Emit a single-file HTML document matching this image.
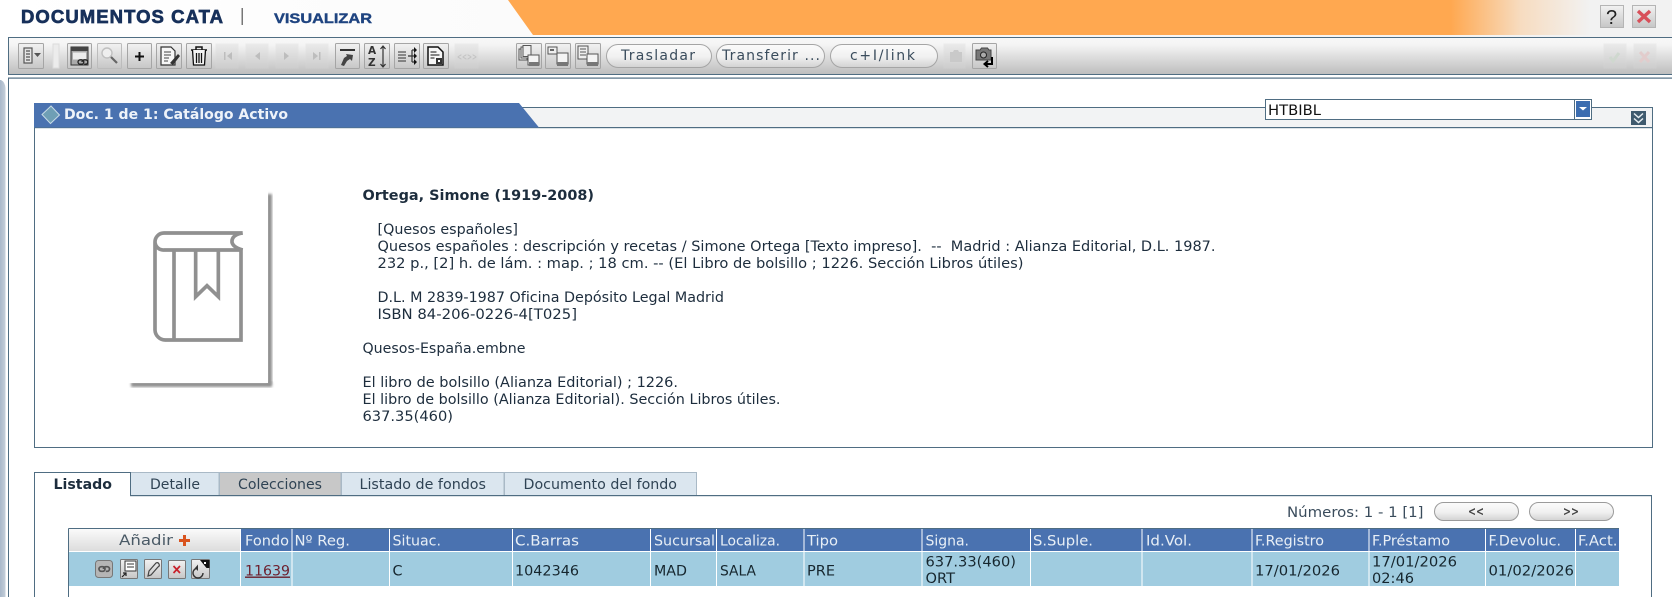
<!DOCTYPE html>
<html lang="es"><head><meta charset="utf-8"><title>Documentos Cata</title>
<style>
html,body{margin:0;padding:0;background:#fff;width:1672px;height:597px;overflow:hidden}
svg{display:block;filter:blur(.3px)}
text{font-family:"DejaVu Sans","Liberation Sans",sans-serif;font-size:14px;fill:#1d2d3d;white-space:pre}
.h{fill:#e8eff6}
.r{fill:#16262e}
.tab{fill:#2f4354}
.ig{fill:none;stroke:#555;stroke-width:1.2}
</style></head><body>
<svg width="1672" height="597" viewBox="0 0 1672 597" xmlns="http://www.w3.org/2000/svg">
<defs>
<linearGradient id="top" x1="0" x2="1" y1="0" y2="0"><stop offset="0" stop-color="#fff"/><stop offset="1" stop-color="#f2f2f2"/></linearGradient>
<linearGradient id="or" x1="508" x2="1672" y1="0" y2="0" gradientUnits="userSpaceOnUse"><stop offset="0" stop-color="#ffa850"/><stop offset=".81" stop-color="#ffa850"/><stop offset=".87" stop-color="#f7dcc0"/><stop offset=".93" stop-color="#f2f2f2"/></linearGradient>
<linearGradient id="tb" x1="0" x2="0" y1="0" y2="1"><stop offset="0" stop-color="#f8f8f8"/><stop offset=".2" stop-color="#f4f4f4"/><stop offset="1" stop-color="#bdbdbd"/></linearGradient>
<linearGradient id="btn" x1="0" x2="0" y1="0" y2="1"><stop offset="0" stop-color="#f2f2f2"/><stop offset="1" stop-color="#c6c6c6"/></linearGradient>
<linearGradient id="pill" x1="0" x2="0" y1="0" y2="1"><stop offset="0" stop-color="#fbfbfb"/><stop offset=".55" stop-color="#f0f0f0"/><stop offset="1" stop-color="#d2d2d2"/></linearGradient>
<linearGradient id="add" x1="0" x2="0" y1="0" y2="1"><stop offset="0" stop-color="#fafafa"/><stop offset="1" stop-color="#dcdcdc"/></linearGradient>
<linearGradient id="side" x1="0" x2="1" y1="0" y2="0"><stop offset="0" stop-color="#a8b8ca"/><stop offset="1" stop-color="#c4cfda"/></linearGradient>
<filter id="sh" x="-20%" y="-20%" width="140%" height="140%"><feGaussianBlur stdDeviation="1.2"/></filter>
</defs>

<!-- top bar -->
<rect x="0" y="0" width="1672" height="37" fill="url(#top)"/>
<polygon points="508,0 1672,0 1672,35 533,35" fill="url(#or)"/>
<text x="21" y="23" textLength="202" lengthAdjust="spacing" style="font-family:'Liberation Sans',sans-serif;font-size:18.500px;font-weight:bold;fill:#17305a;stroke:#17305a;stroke-width:.7">DOCUMENTOS CATA</text>
<rect x="241.500" y="8" width="1.500" height="17" fill="#777"/>
<text x="274" y="23" textLength="98" lengthAdjust="spacingAndGlyphs" style="font-family:'Liberation Sans',sans-serif;font-size:14px;font-weight:bold;fill:#1f4480;stroke:#1f4480;stroke-width:.4">VISUALIZAR</text>
<rect x="1600.500" y="5.500" width="23" height="22" fill="url(#btn)" stroke="#b5b5b5"/>
<text x="1606" y="24" style="font-size:20px;fill:#222;font-family:'Liberation Sans',sans-serif">?</text>
<rect x="1632.500" y="5.500" width="23" height="22" fill="url(#btn)" stroke="#b5b5b5"/>
<path d="M1638 11l12 11M1650 11l-12 11" stroke="#d8505a" stroke-width="3.400" fill="none"/>

<!-- toolbar -->
<rect x="8.500" y="37.500" width="1664" height="37" fill="url(#tb)" stroke="#4f6d82"/>
<rect x="8" y="77.500" width="1664" height="1.200" fill="#4f6d82"/>

<g fill="url(#btn)" stroke="#a5a5a5">
<rect x="18.500" y="43.500" width="25" height="25" rx="1"/>
<rect x="67.500" y="43.500" width="24" height="25" rx="1"/>
<rect x="97.500" y="43.500" width="24" height="25" rx="1" stroke="#bcbcbc"/>
<rect x="127.500" y="43.500" width="24" height="25" rx="1"/>
<rect x="156.500" y="43.500" width="25" height="25" rx="1"/>
<rect x="186.500" y="43.500" width="25" height="25" rx="1"/>
<rect x="335.500" y="43.500" width="24" height="25" rx="1"/>
<rect x="364.500" y="43.500" width="25" height="25" rx="1"/>
<rect x="394.500" y="43.500" width="25" height="25" rx="1"/>
<rect x="423.500" y="43.500" width="25" height="25" rx="1"/>
<rect x="516.500" y="43.500" width="25" height="25" rx="1"/>
<rect x="545.500" y="43.500" width="25" height="25" rx="1"/>
<rect x="575.500" y="43.500" width="25" height="25" rx="1"/>
<rect x="972.500" y="43.500" width="24" height="25" rx="1"/>
</g>
<rect x="53" y="44" width="6" height="24" fill="#ececec" stroke="#dcdcdc"/>
<!-- disabled -->
<g fill="#d5d5d5" stroke="#d9d9d9" opacity=".35">
<rect x="216" y="44" width="22" height="24"/><rect x="246" y="44" width="22" height="24"/>
<rect x="276" y="44" width="22" height="24"/><rect x="306" y="44" width="22" height="24"/>
<rect x="455" y="44" width="23" height="24"/><rect x="944" y="44" width="21" height="24"/>
<rect x="1604" y="44" width="22" height="24"/><rect x="1634" y="44" width="22" height="24"/>
</g>
<g fill="#bdbdbd">
<path d="M224 52h1.500v8H224zM232 52v8l-5-4z"/>
<path d="M260 52v8l-5-4z"/>
<path d="M284 52v8l5-4z"/>
<path d="M313 52v8l5-4zM319 52h1.500v8H319z"/>
</g>
<text x="457" y="60" style="font-size:10px;fill:#c4c4c4;font-weight:bold" textLength="20" lengthAdjust="spacingAndGlyphs">&lt;&lt;&gt;&gt;</text>
<path d="M950 52h3l1-2h4l1 2h3v10h-12z" fill="#c9c9c9"/>
<path d="M1610 57l3 4 6-8" stroke="#cfd8cf" stroke-width="3" fill="none"/>
<path d="M1640 52l9 10M1649 52l-9 10" stroke="#e2cccc" stroke-width="3" fill="none"/>

<!-- button 1 -->
<g class="ig"><rect x="24" y="48" width="8" height="15" fill="#e4e4e4"/><path d="M26 51h4M26 54h4M26 57h4M26 60h4"/></g>
<path d="M34 53h7l-3.500 4z" fill="#555"/>
<!-- window link -->
<rect x="71" y="47" width="17" height="18" fill="#aaa" stroke="#333"/><rect x="71" y="47" width="17" height="4" fill="#444"/>
<rect x="73" y="52.500" width="13" height="7" fill="#ececec"/>
<path d="M78 62a2.200 2.200 0 0 1 2.200-2.200h1.400a2.200 2.200 0 0 1 0 4.400h-1.400a2.200 2.200 0 0 1-2.200-2.200zM82 62a2.200 2.200 0 0 1 2.200-2.200h1.400a2.200 2.200 0 0 1 0 4.400h-1.400" stroke="#222" stroke-width="1.300" fill="none"/>
<!-- magnifier -->
<circle cx="107" cy="53" r="5" fill="#eee" stroke="#c0c0c0" stroke-width="1.400"/>
<path d="M111 57l6 6" stroke="#666" stroke-width="2.200"/>
<!-- plus -->
<path d="M139.500 52v9M135 56.500h9" stroke="#111" stroke-width="2"/>
<!-- edit -->
<path d="M161 47h10l4 4v14h-14z" fill="#f6f6f6" stroke="#333" stroke-width="1.200"/>
<path d="M164 52h7M164 55h7M164 58h5M164 61h4" stroke="#444" stroke-width="1"/>
<path d="M170 63l8-9 2 2-7 9z" fill="#333"/>
<!-- trash -->
<path d="M191 50h16M196 50v-3h6v3" stroke="#111" stroke-width="1.500" fill="none"/>
<path d="M192.500 50l1 15h11l1-15M196.500 53v10M199 53v10M201.500 53v10" stroke="#111" stroke-width="1.300" fill="#f4f4f4"/>
<!-- 335 -->
<rect x="340" y="49" width="15" height="2" fill="#333"/>
<path d="M341 65l3-7 3-2-1-2 7 1-1 6-2-2-3 2-3 5z" fill="#444"/>
<!-- A-Z -->
<text x="368" y="54" style="font-size:10.500px;font-weight:bold;fill:#333">A</text>
<text x="368" y="66" style="font-size:10.500px;font-weight:bold;fill:#333">Z</text>
<path d="M383 46v21M380.500 49l2.500-3 2.500 3M380.500 64l2.500 3 2.500-3" stroke="#333" stroke-width="1.200" fill="none"/>
<!-- 394 -->
<path d="M398 52h8M398 55h8M398 58h8M398 61h8" stroke="#333" stroke-width="1.100"/>
<path d="M408 56h4M412 50v12M412 50h3M412 62h3M412 56h3" stroke="#333" stroke-width="1.200" fill="none"/>
<path d="M414 47l3 3-3 3zM414 53l3 3-3 3zM414 59l3 3-3 3z" fill="#111"/>
<!-- 423 -->
<path d="M428 47h10l5 5v13h-15z" fill="#f6f6f6" stroke="#111" stroke-width="1.500"/>
<path d="M430.500 52h6M430.500 55h9M430.500 58h4" stroke="#111" stroke-width="1.100"/>
<rect x="436" y="58" width="6" height="6" fill="#333"/><rect x="438" y="60" width="2" height="2" fill="#fff"/>
<!-- 516 -->
<g stroke="#555" stroke-width="1" fill="#eee">
<rect x="519" y="49" width="8" height="11"/><rect x="521" y="47" width="8" height="11"/><rect x="523" y="45.500" width="8" height="11"/>
<rect x="528" y="55" width="11" height="10" fill="#f4f4f4"/></g>
<rect x="529" y="62" width="10" height="4" fill="#777"/>
<!-- 545 -->
<rect x="548" y="47" width="9" height="7" fill="#eee" stroke="#555"/><rect x="550" y="49" width="4" height="2" fill="#666"/>
<rect x="557" y="53" width="11" height="11" fill="#f4f4f4" stroke="#555"/><rect x="557" y="62" width="11" height="4" fill="#777"/>
<!-- 575 -->
<rect x="578" y="46" width="10" height="13" fill="#eee" stroke="#555"/><path d="M580 49h6M580 52h6M580 55h6" stroke="#555"/>
<rect x="587" y="54" width="11" height="10" fill="#f4f4f4" stroke="#555"/><rect x="587" y="62" width="11" height="4" fill="#777"/>
<!-- camera -->
<path d="M976 50h4l1.500-2h6l1.500 2h2v10h-15z" fill="#777" stroke="#444"/><circle cx="983.500" cy="55" r="3" fill="#aaa" stroke="#222"/>
<path d="M992 57v7h-7M988 61l-3.500 3 3.500 3" stroke="#000" stroke-width="2" fill="none"/>

<!-- pills -->
<g fill="url(#pill)" stroke="#a5a5a5">
<rect x="606.500" y="44.500" width="105" height="23" rx="11.500"/>
<rect x="716.500" y="44.500" width="108" height="23" rx="11.500"/>
<rect x="830.500" y="44.500" width="107" height="23" rx="11.500"/>
</g>
<text x="621" y="60" textLength="74" style="fill:#3a4c5c">Trasladar</text>
<text x="722" y="60" textLength="98" style="fill:#3a4c5c">Transferir ...</text>
<text x="850" y="60" textLength="65" style="fill:#3a4c5c">c+I/link</text>

<!-- side strip -->
<path d="M0 80h1q4 2 4.500 8v509H0z" fill="url(#side)"/>
<rect x="8" y="78" width="1" height="519" fill="#4f6d82"/>

<!-- panel -->
<rect x="34.500" y="107.500" width="1618" height="340" fill="#fff" stroke="#4f6d82"/>
<rect x="35" y="108" width="1617" height="19" fill="#f2f3f4"/>
<rect x="35" y="127" width="1617" height="1.200" fill="#4f6d82"/>
<polygon points="34,103 519,103 539,127.500 34,127.500" fill="#4a72b0"/>
<path d="M51 106l-9 8.500 8.500 9 9-8.500z" fill="#6f9fb5" stroke="#c8dbe6" stroke-width="1"/>
<text x="64" y="119" textLength="224" lengthAdjust="spacingAndGlyphs" style="font-weight:bold;fill:#eef3f9">Doc. 1 de 1: Catálogo Activo</text>
<rect x="1265.500" y="99.500" width="326" height="20" fill="#fff" stroke="#4f6d82"/>
<rect x="1574" y="99.500" width="1" height="20" fill="#4f6d82"/>
<rect x="1576" y="101" width="14" height="16" fill="#3c6db0"/>
<path d="M1579 107h8l-4 3.500z" fill="#fff"/>
<text x="1268" y="115" textLength="53" lengthAdjust="spacingAndGlyphs" style="fill:#111">HTBIBL</text>
<rect x="1631" y="111" width="15" height="14" fill="#3f5a6e"/>
<path d="M1634 113.500l4.500 4 4.500-4M1634 118.500l4.500 4 4.500-4" stroke="#e8eef2" stroke-width="1.500" fill="none"/>

<!-- card + book -->
<rect x="267" y="194" width="5" height="190" fill="#8f8f8f" filter="url(#sh)"/>
<rect x="131" y="382" width="141" height="5" fill="#8f8f8f" filter="url(#sh)"/>
<rect x="125" y="190" width="143" height="193" fill="#fff"/>
<g transform="translate(100 170) scale(.33333)" fill="none" stroke="#909090" stroke-width="11">
<path d="M428 189H192a27 27 0 0 0-27 27V480a31 31 0 0 0 31 30H423V240H192a25 25 0 0 1-27-24"/>
<path d="M428 189q-30 5-32 23t32 28"/>
<path d="M222 240V510"/>
<path d="M287 240V380L321 347L355 380V240"/>
</g>

<!-- record text -->
<text x="362.500" y="200" textLength="231.500" lengthAdjust="spacingAndGlyphs" style="font-weight:bold">Ortega, Simone (1919-2008)</text>
<text x="377.500" y="234" textLength="140.500" lengthAdjust="spacingAndGlyphs">[Quesos españoles]</text>
<text x="377.500" y="251" textLength="838" lengthAdjust="spacingAndGlyphs">Quesos españoles : descripción y recetas / Simone Ortega [Texto impreso].  --  Madrid : Alianza Editorial, D.L. 1987.</text>
<text x="377.500" y="268" textLength="646" lengthAdjust="spacingAndGlyphs">232 p., [2] h. de lám. : map. ; 18 cm. -- (El Libro de bolsillo ; 1226. Sección Libros útiles)</text>
<text x="377.500" y="302" textLength="346.500" lengthAdjust="spacingAndGlyphs">D.L. M 2839-1987 Oficina Depósito Legal Madrid</text>
<text x="377.500" y="319" textLength="199.500" lengthAdjust="spacingAndGlyphs">ISBN 84-206-0226-4[T025]</text>
<text x="362.500" y="353" textLength="163" lengthAdjust="spacingAndGlyphs">Quesos-España.embne</text>
<text x="362.500" y="387" textLength="315.500" lengthAdjust="spacingAndGlyphs">El libro de bolsillo (Alianza Editorial) ; 1226.</text>
<text x="362.500" y="404" textLength="418" lengthAdjust="spacingAndGlyphs">El libro de bolsillo (Alianza Editorial). Sección Libros útiles.</text>
<text x="362.500" y="421" textLength="90.500" lengthAdjust="spacingAndGlyphs">637.35(460)</text>

<!-- tabs -->
<rect x="34.500" y="495.500" width="1617" height="110" fill="#fff" stroke="#4f6d82"/>
<rect x="130.500" y="472.500" width="88.500" height="23" fill="#dbe6ef" stroke="#a9b9c6"/>
<rect x="219.500" y="472.500" width="121.500" height="23" fill="#c8c8c8" stroke="#a9b9c6"/>
<rect x="341.500" y="472.500" width="162.500" height="23" fill="#dbe6ef" stroke="#a9b9c6"/>
<rect x="504.500" y="472.500" width="192" height="23" fill="#dbe6ef" stroke="#a9b9c6"/>
<rect x="130" y="495" width="1522" height="1.200" fill="#4f6d82"/>
<path d="M34.500 496V472.500H130.500V496" fill="#fff" stroke="#4f6d82"/>
<rect x="35" y="494" width="95" height="3" fill="#fff"/>
<text x="53.500" y="489" textLength="58.500" lengthAdjust="spacingAndGlyphs" style="font-weight:bold">Listado</text>
<text x="150" y="489" textLength="50" lengthAdjust="spacingAndGlyphs" class="tab">Detalle</text>
<text x="238" y="489" textLength="84" lengthAdjust="spacingAndGlyphs" class="tab">Colecciones</text>
<text x="359.500" y="489" textLength="126.500" lengthAdjust="spacingAndGlyphs" class="tab">Listado de fondos</text>
<text x="523.500" y="489" textLength="153.500" lengthAdjust="spacingAndGlyphs" class="tab">Documento del fondo</text>

<!-- pager -->
<text x="1287" y="517" textLength="136.500" lengthAdjust="spacingAndGlyphs" style="fill:#3a4c5c">Números: 1 - 1 [1]</text>
<g fill="url(#pill)" stroke="#9b9b9b">
<rect x="1434.500" y="502.500" width="84" height="18" rx="9"/>
<rect x="1529.500" y="502.500" width="84" height="18" rx="9"/>
</g>
<text x="1468" y="515.500" style="font-size:12px;font-weight:bold;fill:#444" textLength="16" lengthAdjust="spacingAndGlyphs">&lt;&lt;</text>
<text x="1563" y="515.500" style="font-size:12px;font-weight:bold;fill:#444" textLength="16" lengthAdjust="spacingAndGlyphs">&gt;&gt;</text>

<!-- table -->
<path d="M68.500 528.500H1619M68.500 528.500V597" stroke="#4f6d82" fill="none"/>
<rect x="69" y="529" width="171" height="22" fill="url(#add)"/>
<rect x="240" y="529" width="1379" height="22" fill="#4a72b0"/>
<rect x="69" y="552" width="1550" height="34" fill="#a0cce0"/>
<g fill="#fff">
<rect x="240" y="529" width="1" height="57"/><rect x="291.500" y="529" width="1" height="57"/>
<rect x="389" y="529" width="1" height="57"/><rect x="512" y="529" width="1" height="57"/>
<rect x="650" y="529" width="1" height="57"/><rect x="716" y="529" width="1" height="57"/>
<rect x="803.500" y="529" width="1" height="57"/><rect x="921.500" y="529" width="1" height="57"/>
<rect x="1030" y="529" width="1" height="57"/><rect x="1141.500" y="529" width="1" height="57"/>
<rect x="1251.500" y="529" width="1" height="57"/><rect x="1368.500" y="529" width="1" height="57"/>
<rect x="1485" y="529" width="1" height="57"/><rect x="1575" y="529" width="1" height="57"/>
</g>
<text x="119" y="545" textLength="54" lengthAdjust="spacingAndGlyphs" style="fill:#4a5a66">Añadir</text>
<path d="M184.500 535v11M179 540.500h11" stroke="#d9531e" stroke-width="3"/>
<text class="h" x="245" y="545.500" textLength="44" lengthAdjust="spacingAndGlyphs">Fondo</text>
<text class="h" x="294.500" y="545.500" textLength="55.500" lengthAdjust="spacingAndGlyphs">Nº Reg.</text>
<text class="h" x="392.500" y="545.500" textLength="48.500" lengthAdjust="spacingAndGlyphs">Situac.</text>
<text class="h" x="515" y="545.500" textLength="64" lengthAdjust="spacingAndGlyphs">C.Barras</text>
<text class="h" x="654" y="545.500" textLength="61" lengthAdjust="spacingAndGlyphs">Sucursal</text>
<text class="h" x="720" y="545.500" textLength="60" lengthAdjust="spacingAndGlyphs">Localiza.</text>
<text class="h" x="807" y="545.500" textLength="31" lengthAdjust="spacingAndGlyphs">Tipo</text>
<text class="h" x="925.500" y="545.500" textLength="43.500" lengthAdjust="spacingAndGlyphs">Signa.</text>
<text class="h" x="1033" y="545.500" textLength="60" lengthAdjust="spacingAndGlyphs">S.Suple.</text>
<text class="h" x="1146" y="545.500" textLength="46" lengthAdjust="spacingAndGlyphs">Id.Vol.</text>
<text class="h" x="1255" y="545.500" textLength="69" lengthAdjust="spacingAndGlyphs">F.Registro</text>
<text class="h" x="1372" y="545.500" textLength="78" lengthAdjust="spacingAndGlyphs">F.Préstamo</text>
<text class="h" x="1488.500" y="545.500" textLength="72.500" lengthAdjust="spacingAndGlyphs">F.Devoluc.</text>
<text class="h" x="1578" y="545.500" textLength="39.500" lengthAdjust="spacingAndGlyphs">F.Act.</text>
<text x="245" y="575.500" textLength="45" lengthAdjust="spacingAndGlyphs" style="fill:#6d1f2d;text-decoration:underline">11639</text>
<text class="r" x="392.500" y="575.500" textLength="10" lengthAdjust="spacingAndGlyphs">C</text>
<text class="r" x="515" y="575.500" textLength="64" lengthAdjust="spacingAndGlyphs">1042346</text>
<text class="r" x="654" y="575.500" textLength="33" lengthAdjust="spacingAndGlyphs">MAD</text>
<text class="r" x="720" y="575.500" textLength="36" lengthAdjust="spacingAndGlyphs">SALA</text>
<text class="r" x="807" y="575.500" textLength="28" lengthAdjust="spacingAndGlyphs">PRE</text>
<text class="r" x="925.500" y="566.500" textLength="90.500" lengthAdjust="spacingAndGlyphs">637.33(460)</text>
<text class="r" x="925.500" y="583" textLength="29.500" lengthAdjust="spacingAndGlyphs">ORT</text>
<text class="r" x="1255" y="575.500" textLength="85" lengthAdjust="spacingAndGlyphs">17/01/2026</text>
<text class="r" x="1372" y="566.500" textLength="85" lengthAdjust="spacingAndGlyphs">17/01/2026</text>
<text class="r" x="1372" y="583" textLength="42" lengthAdjust="spacingAndGlyphs">02:46</text>
<text class="r" x="1488.500" y="575.500" textLength="85.500" lengthAdjust="spacingAndGlyphs">01/02/2026</text>

<!-- row icons -->
<g fill="url(#btn)" stroke="#777">
<rect x="95.500" y="560.500" width="17" height="17" rx="3" fill="#b5b5b5"/>
<rect x="120.500" y="559.500" width="17" height="19" rx="1"/>
<rect x="144.500" y="559.500" width="17" height="19" rx="1"/>
<rect x="168.500" y="560.500" width="17" height="18" rx="1"/>
<rect x="191.500" y="559.500" width="18" height="19" rx="1"/>
</g>
<path d="M99 569a2.300 2.300 0 0 1 2.300-2.300h1.400a2.300 2.300 0 0 1 0 4.600h-1.400a2.300 2.300 0 0 1-2.300-2.300zM103.500 569a2.300 2.300 0 0 1 2.300-2.300h1.400a2.300 2.300 0 0 1 0 4.600h-1.400" fill="none" stroke="#555" stroke-width="1.700"/>
<rect x="125" y="561" width="11" height="10" fill="#fff" stroke="#333"/>
<path d="M127 564h7M127 567h7" stroke="#333"/>
<path d="M122 577l4-4M123 573h3v3" stroke="#222" stroke-width="1.200" fill="none"/>
<path d="M148 576l1-5 7-8q2-1 3 1t-1 3l-7 8z" fill="none" stroke="#444" stroke-width="1.200"/>
<path d="M173.500 566l6.500 7M180 566l-6.500 7" stroke="#c8202a" stroke-width="1.700"/>
<path d="M198 568a5 5 0 1 0 5 5" fill="none" stroke="#333" stroke-width="1.400"/>
<path d="M198 564.500l-3 3.500 3 3z" fill="#333"/>
<path d="M200 560h9.500v8l-3 0z" fill="#111"/><rect x="204" y="562" width="2" height="2" fill="#fff"/>
</svg>
</body></html>
